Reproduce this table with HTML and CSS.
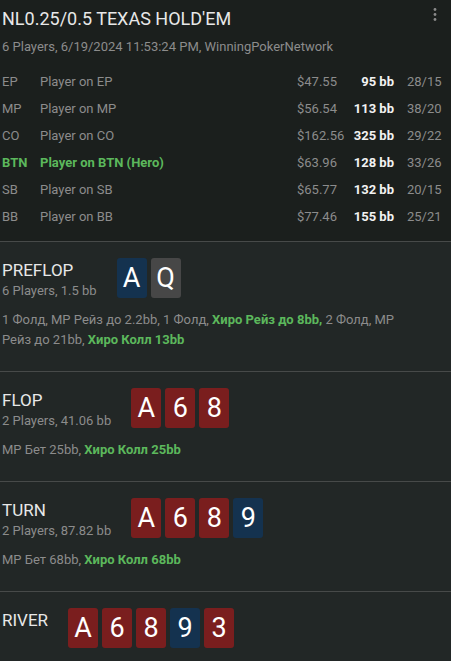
FILE: index.html
```html
<!DOCTYPE html>
<html lang="ru">
<head>
<meta charset="utf-8">
<title>Hand</title>
<link rel="stylesheet" href="styles.css">
</head>
<body>
<div class="hand">
  <header class="hand-head">
    <div class="title-row">
      <h1 class="title">NL0.25/0.5 TEXAS HOLD'EM</h1>
      <button class="menu" aria-label="Menu">
        <svg width="4" height="16" viewBox="0 0 4 16"><circle cx="2" cy="2.5" r="1.4"/><circle cx="2" cy="7.5" r="1.4"/><circle cx="2" cy="12.5" r="1.4"/></svg>
      </button>
    </div>
    <div class="meta">6 Players, 6/19/2024 11:53:24 PM, WinningPokerNetwork</div>
    <div class="players">
      <div class="prow"><span class="pos">EP</span><span class="name">Player on EP</span><span class="cash">$47.55</span><span class="bb">95 bb</span><span class="stat">28/15</span></div>
      <div class="prow"><span class="pos">MP</span><span class="name">Player on MP</span><span class="cash">$56.54</span><span class="bb">113 bb</span><span class="stat">38/20</span></div>
      <div class="prow"><span class="pos">CO</span><span class="name">Player on CO</span><span class="cash">$162.56</span><span class="bb">325 bb</span><span class="stat">29/22</span></div>
      <div class="prow hero"><span class="pos">BTN</span><span class="name">Player on BTN (Hero)</span><span class="cash">$63.96</span><span class="bb">128 bb</span><span class="stat">33/26</span></div>
      <div class="prow"><span class="pos">SB</span><span class="name">Player on SB</span><span class="cash">$65.77</span><span class="bb">132 bb</span><span class="stat">20/15</span></div>
      <div class="prow"><span class="pos">BB</span><span class="name">Player on BB</span><span class="cash">$77.46</span><span class="bb">155 bb</span><span class="stat">25/21</span></div>
    </div>
  </header>

  <section class="street">
    <div class="street-head">
      <div class="street-info">
        <div class="street-name">PREFLOP</div>
        <div class="street-meta">6 Players, 1.5 bb</div>
      </div>
      <div class="cards">
        <span class="card blue">A</span><span class="card gray">Q</span>
      </div>
    </div>
    <p class="actions">1 Фолд, MP Рейз до 2.2bb, 1 Фолд, <b class="hero-act">Хиро Рейз до 8bb,</b> 2 Фолд, MP Рейз до 21bb, <b class="hero-act">Хиро Колл 13bb</b></p>
  </section>

  <section class="street">
    <div class="street-head">
      <div class="street-info">
        <div class="street-name">FLOP</div>
        <div class="street-meta">2 Players, 41.06 bb</div>
      </div>
      <div class="cards">
        <span class="card red">A</span><span class="card red">6</span><span class="card red">8</span>
      </div>
    </div>
    <p class="actions">MP Бет 25bb, <b class="hero-act">Хиро Колл 25bb</b></p>
  </section>

  <section class="street">
    <div class="street-head">
      <div class="street-info">
        <div class="street-name">TURN</div>
        <div class="street-meta">2 Players, 87.82 bb</div>
      </div>
      <div class="cards">
        <span class="card red">A</span><span class="card red">6</span><span class="card red">8</span><span class="card blue">9</span>
      </div>
    </div>
    <p class="actions">MP Бет 68bb, <b class="hero-act">Хиро Колл 68bb</b></p>
  </section>

  <section class="street">
    <div class="street-head">
      <div class="street-info">
        <div class="street-name">RIVER</div>
      </div>
      <div class="cards">
        <span class="card red">A</span><span class="card red">6</span><span class="card red">8</span><span class="card blue">9</span><span class="card red">3</span>
      </div>
    </div>
  </section>
</div>
</body>
</html>
```

FILE: styles.css
```css
* { box-sizing: border-box; }

html, body {
  margin: 0;
  padding: 0;
  background: #222726;
}

body {
  font-family: Roboto, "Open Sans", sans-serif;
  color: #e6e6e6;
}

.hand-head {
  background: #1b1f1d;
  padding: 7px 0 11px 2px;
}

.title-row {
  display: flex;
  justify-content: space-between;
  align-items: flex-start;
}

.title {
  margin: 0;
  font-size: 18px;
  line-height: 24px;
  font-weight: 400;
  color: #e8e8e8;
}

.menu {
  background: none;
  border: 0;
  padding: 0;
  margin: 0 14px 0 0;
  width: 4px;
  height: 16px;
  fill: #8a8a8a;
  display: flex;
}

.meta {
  margin-top: 6px;
  font-size: 13px;
  line-height: 20px;
  color: #8c8c8c;
}

.players {
  margin-top: 11px;
}

.prow {
  display: grid;
  grid-template-columns: 38px 1fr 50px 48px 56px;
  height: 27px;
  align-items: center;
  font-size: 13px;
  color: #8c8c8c;
  white-space: nowrap;
}

.prow .bb {
  text-align: right;
  color: #f2f2f2;
  font-weight: 700;
  padding-right: 1px;
}

.prow .stat {
  padding-left: 12px;
}

.prow.hero .pos,
.prow.hero .name {
  color: #5cb85c;
  font-weight: 700;
}

.street {
  border-top: 1px solid #474a49;
  padding: 16px 0 21px 2px;
}

.street-head {
  display: flex;
  align-items: flex-start;
  gap: 20px;
}

.street-info {
  padding-top: 1px;
}

.street-name {
  font-size: 17px;
  line-height: 22px;
  color: #e8e8e8;
}

.street-meta {
  font-size: 13px;
  line-height: 20px;
  color: #8c8c8c;
}

.cards {
  display: flex;
  gap: 4px;
}

.card {
  width: 30px;
  height: 40px;
  border-radius: 3px;
  color: #ffffff;
  font-size: 27px;
  line-height: 40px;
  text-align: center;
}

.card.red { background: #7a1e1e; }
.card.blue { background: #14324f; }
.card.gray { background: #474747; }

.actions {
  margin: 9px 36px 0 0;
  font-size: 13px;
  line-height: 20px;
  color: #8c8c8c;
}

.hero-act {
  color: #5cb85c;
  font-weight: 700;
}
```
